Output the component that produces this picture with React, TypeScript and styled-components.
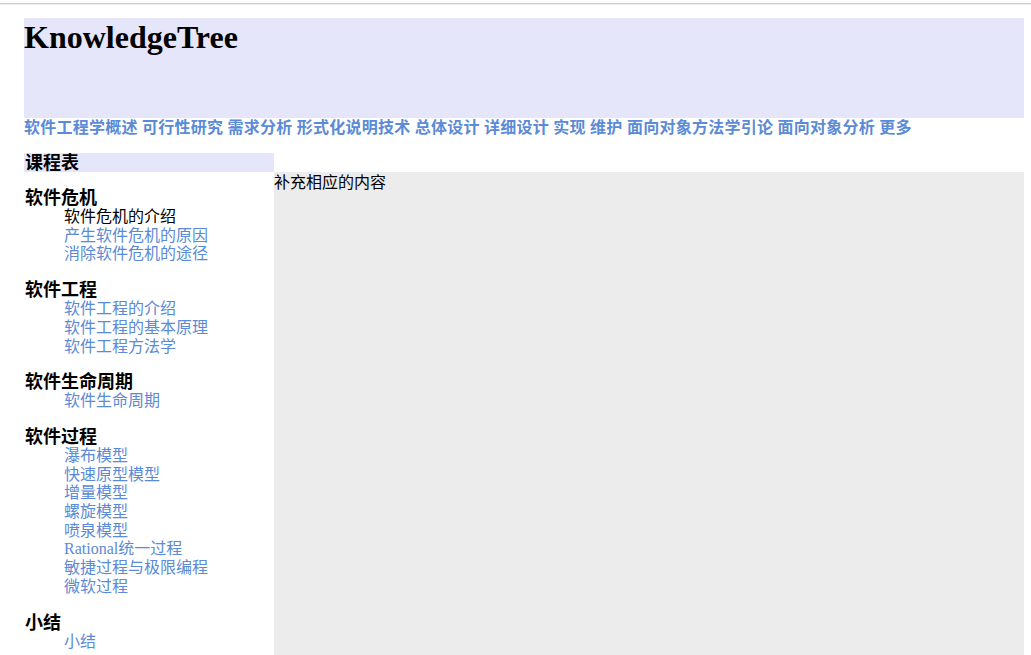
import React from 'react';
import styled, { createGlobalStyle } from 'styled-components';

const GlobalStyle = createGlobalStyle`
    html, body {
        margin: 0;
        padding: 0;
        background: #ffffff;
    }
    body {
        font-family: "Liberation Serif", "Noto Sans CJK SC", serif;
        font-size: 16px;
        color: #000;
    }
`;

const TopRule = styled.div`
    height: 3px;
    border-bottom: 1px solid #cfcfcf;
    box-shadow: 0 1px 0 #ededed;
`;

const Page = styled.div`
    width: 1000px;
    padding: 14px 0 0 24px;
`;

const Header = styled.header`
    height: 100px;
    background: #e6e6fa;
`;

const Title = styled.h1`
    margin: 0;
    padding-top: 1px;
    font-size: 32px;
    font-weight: bold;
    line-height: 37px;
`;

const Nav = styled.nav`
    line-height: 19px;
    font-size: 16px;
    font-weight: bold;
    letter-spacing: 0.25px;
`;

const NavLink = styled.a`
    color: #5b8ad6;
    text-decoration: none;
`;

const Body = styled.div`
    display: flex;
    align-items: flex-start;
    margin-top: 16px;
`;

const Sidebar = styled.aside`
    width: 250px;
    flex: none;
`;

const SideTitle = styled.div`
    background: #e6e6fa;
    font-size: 18px;
    font-weight: bold;
    line-height: 17px;
    padding: 2px 0 0 1px;
`;

const Group = styled.dl`
    margin: 16px 0 0 1px;
`;

const GroupTitle = styled.dt`
    font-size: 18px;
    font-weight: bold;
    line-height: 20px;
`;

const Item = styled.dd`
    margin-left: 39px;
    line-height: 18.7px;
`;

const ItemLink = styled.a<{ $current?: boolean }>`
    color: ${p => (p.$current ? '#000' : '#5b8ad6')};
    text-decoration: none;
`;

const Content = styled.main`
    flex: 1;
    margin-top: 19px;
    min-height: 500px;
    background: #ececec;
    line-height: 21px;
`;

const navItems = [
    '软件工程学概述', '可行性研究', '需求分析', '形式化说明技术', '总体设计',
    '详细设计', '实现', '维护', '面向对象方法学引论', '面向对象分析', '更多',
];

const groups = [
    { title: '软件危机', items: ['软件危机的介绍', '产生软件危机的原因', '消除软件危机的途径'] },
    { title: '软件工程', items: ['软件工程的介绍', '软件工程的基本原理', '软件工程方法学'] },
    { title: '软件生命周期', items: ['软件生命周期'] },
    {
        title: '软件过程',
        items: ['瀑布模型', '快速原型模型', '增量模型', '螺旋模型', '喷泉模型', 'Rational统一过程', '敏捷过程与极限编程', '微软过程'],
    },
    { title: '小结', items: ['小结'] },
];

export default function App() {
    return (
        <>
            <GlobalStyle />
            <TopRule />
            <Page>
                <Header>
                    <Title>KnowledgeTree</Title>
                </Header>
                <Nav>
                    {navItems.map((n, i) => (
                        <React.Fragment key={n}>
                            <NavLink href="#">{n}</NavLink>
                            {i < navItems.length - 1 ? ' ' : ''}
                        </React.Fragment>
                    ))}
                </Nav>
                <Body>
                    <Sidebar>
                        <SideTitle>课程表</SideTitle>
                        {groups.map((g, gi) => (
                            <Group key={g.title}>
                                <GroupTitle>{g.title}</GroupTitle>
                                {g.items.map((it, ii) => (
                                    <Item key={it + ii}>
                                        <ItemLink href="#" $current={gi === 0 && ii === 0}>{it}</ItemLink>
                                    </Item>
                                ))}
                            </Group>
                        ))}
                    </Sidebar>
                    <Content>补充相应的内容</Content>
                </Body>
            </Page>
        </>
    );
}
